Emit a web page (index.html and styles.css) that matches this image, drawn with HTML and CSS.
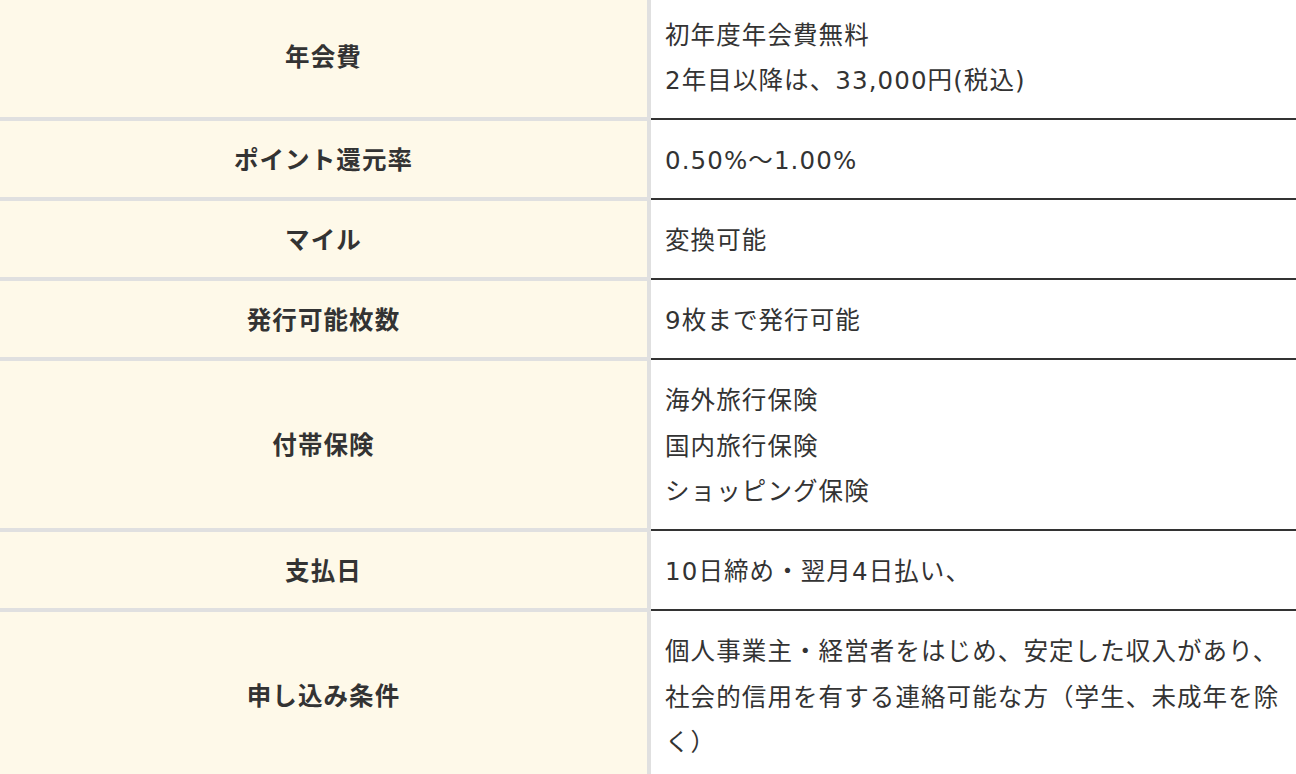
FILE: index.html
```html
<!DOCTYPE html>
<html lang="ja">
<head>
<meta charset="utf-8">
<title>カード詳細</title>
<link rel="stylesheet" href="styles.css">
</head>
<body>
<table class="spec">
  <colgroup><col class="spec-head-col"><col class="spec-data-col"></colgroup>
  <tbody>
    <tr><th>年会費</th><td>初年度年会費無料<br>2年目以降は、33,000円(税込)</td></tr>
    <tr><th>ポイント還元率</th><td>0.50%〜1.00%</td></tr>
    <tr><th>マイル</th><td>変換可能</td></tr>
    <tr><th>発行可能枚数</th><td>9枚まで発行可能</td></tr>
    <tr><th>付帯保険</th><td>海外旅行保険<br>国内旅行保険<br>ショッピング保険</td></tr>
    <tr><th>支払日</th><td>10日締め・翌月4日払い、</td></tr>
    <tr><th>申し込み条件</th><td>個人事業主・経営者をはじめ、安定した収入があり、社会的信用を有する連絡可能な方（学生、未成年を除く）</td></tr>
  </tbody>
</table>
</body>
</html>
```

FILE: styles.css
```css
html, body {
  margin: 0;
  padding: 0;
  background: #ffffff;
}
body {
  font-family: "DejaVu Sans", "Noto Sans CJK JP", sans-serif;
  color: #333333;
  overflow: hidden;
}
.spec {
  width: 1296px;
  margin-top: -6px;
  border-collapse: collapse;
  table-layout: fixed;
  font-size: 24.5px;
  line-height: 45.5px;
  letter-spacing: 1.1px;
}
.spec-head-col { width: 649px; }
.spec-data-col { width: 647px; }
.spec th {
  background: #fef9e9;
  font-weight: 700;
  text-align: center;
  vertical-align: middle;
  padding: 17px 10px 13px;
  border-right: 4px solid #e0e0e0;
  border-bottom: 4px solid #e0e0e0;
}
.spec td {
  text-align: left;
  vertical-align: middle;
  padding: 18.5px 12px 14px 14px;
  border-bottom: 2px solid #333333;
  font-weight: 400;
}
```
